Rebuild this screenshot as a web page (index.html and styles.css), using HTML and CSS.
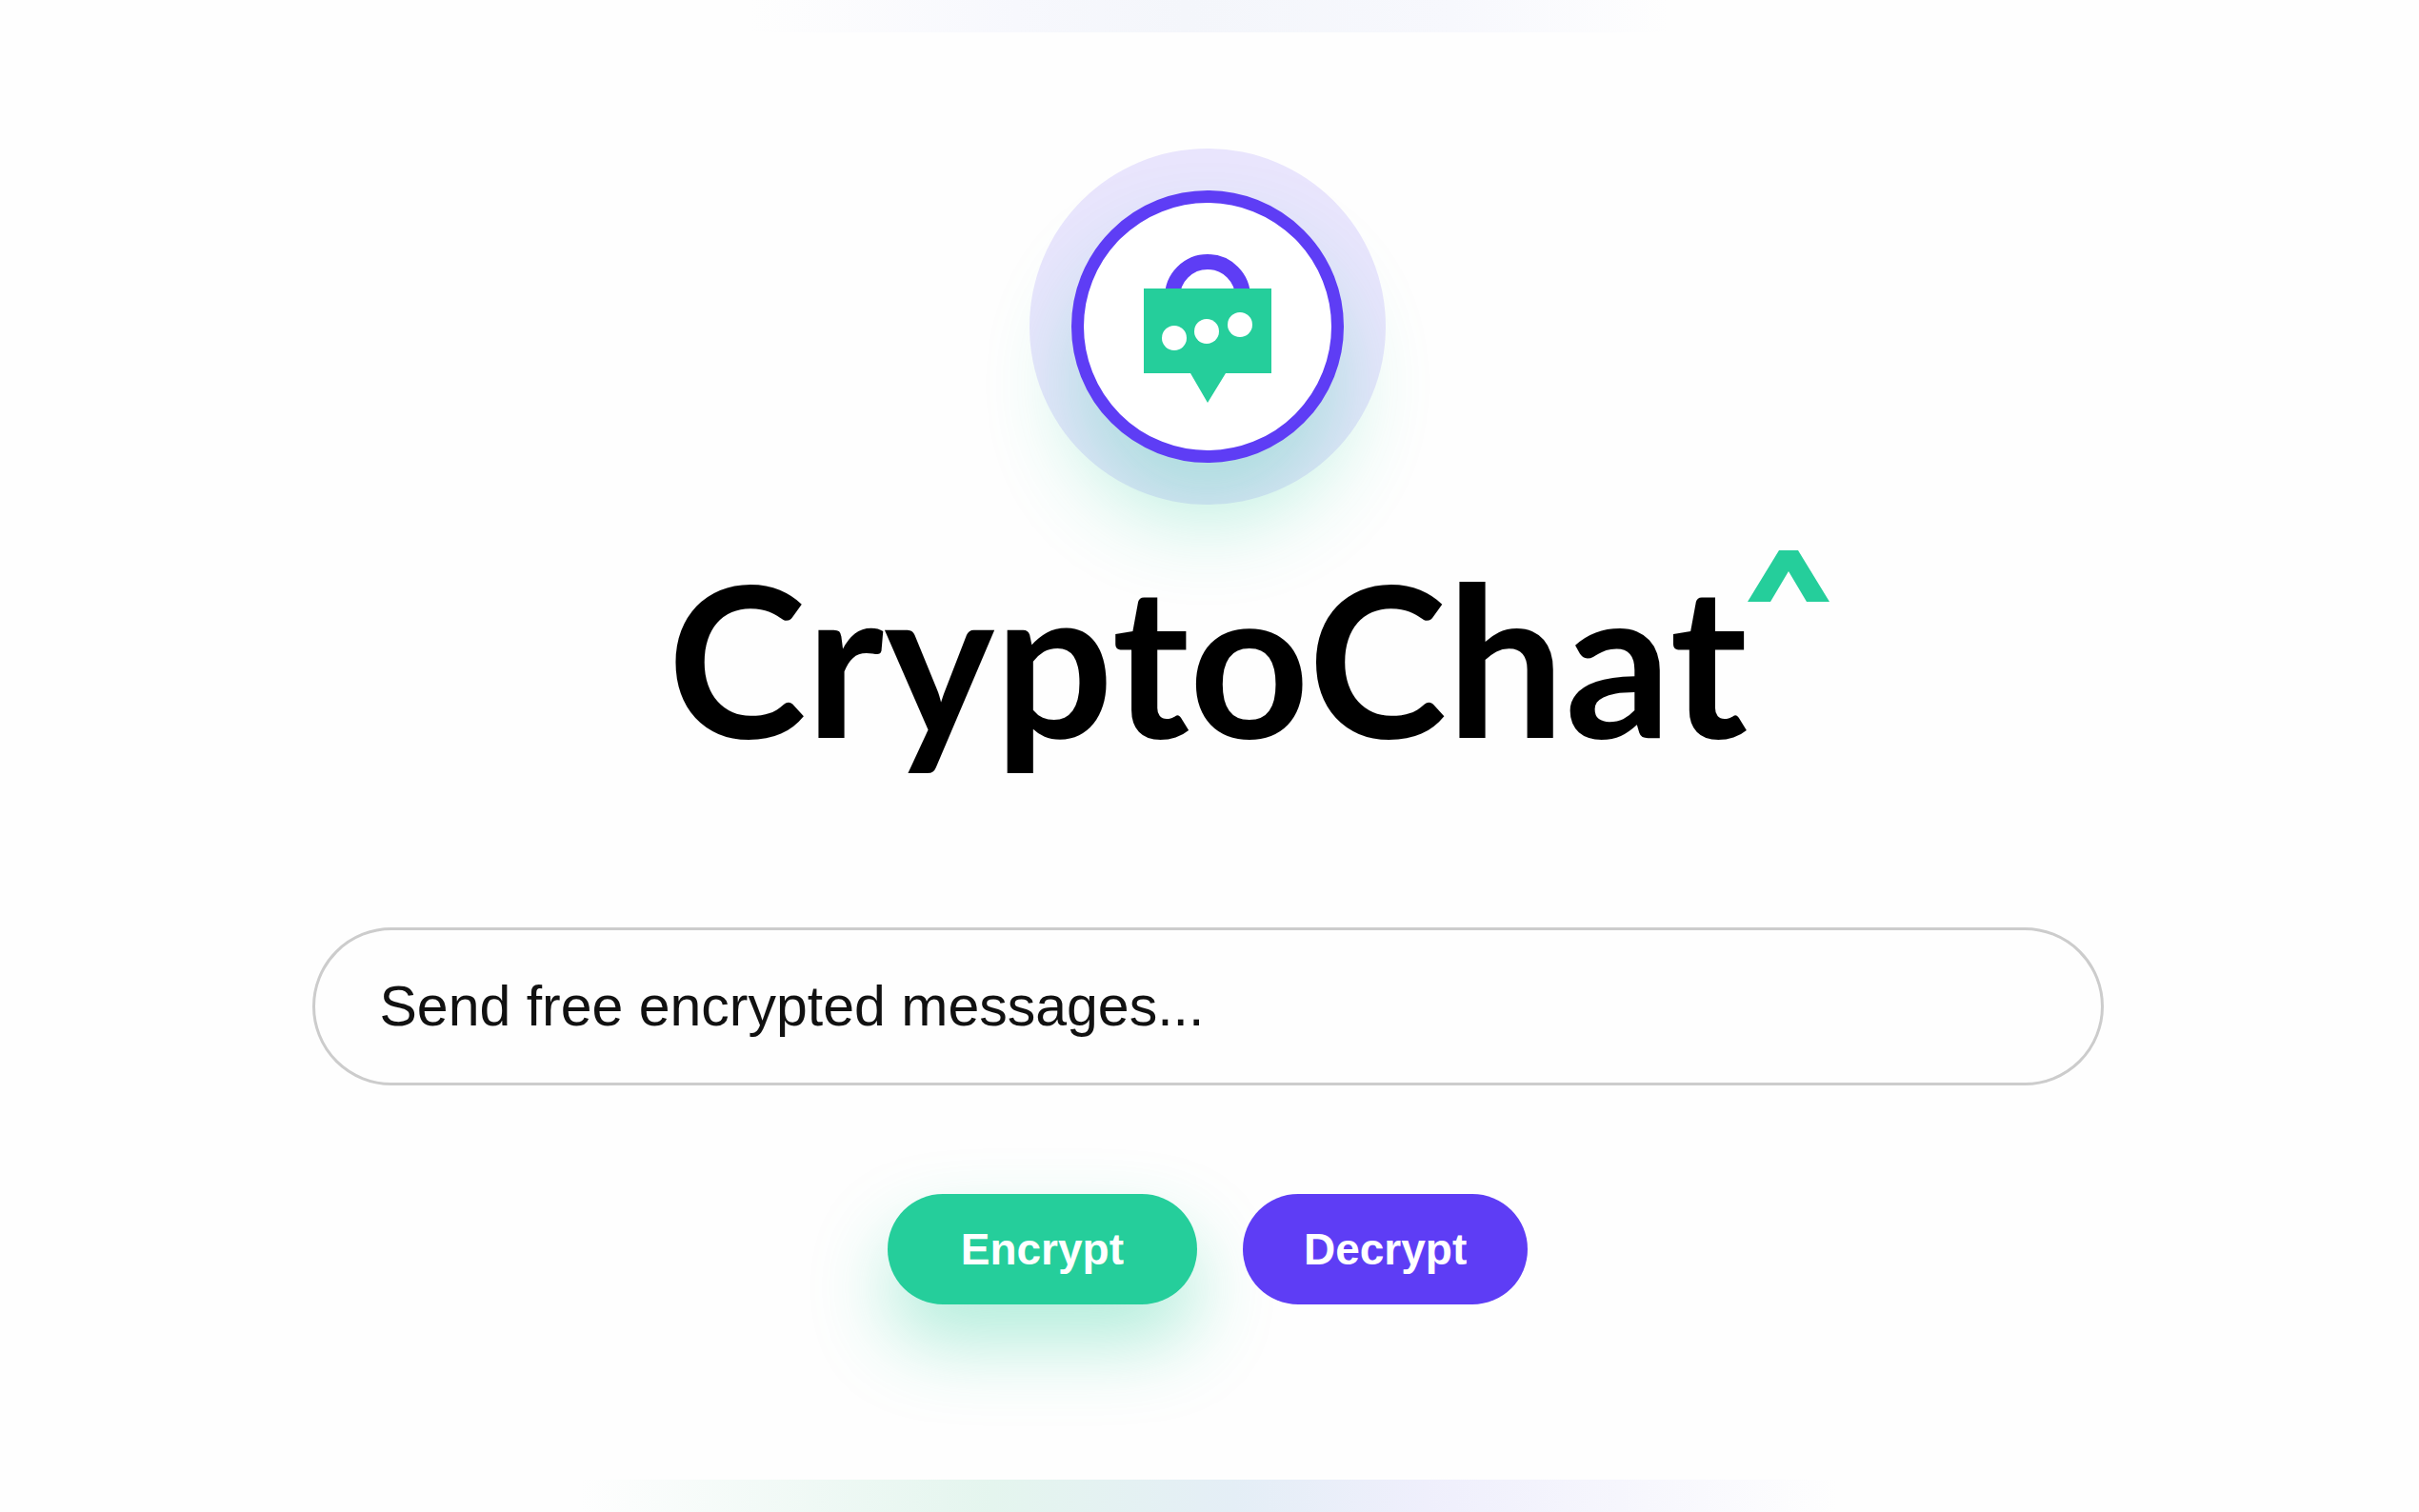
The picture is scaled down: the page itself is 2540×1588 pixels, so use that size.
FILE: index.html
```html
<!DOCTYPE html>
<html lang="en">
<head>
    <meta charset="UTF-8">
    <meta name="viewport" content="width=device-width, initial-scale=1.0">
    <title>CryptoChat</title>
    <link rel="stylesheet" href="styles.css">
</head>
<body>

    <div class="glow glow-top"></div>

    <main class="container">
        <!-- Logo -->
        <div class="logo">
            <div class="logo-ring">
                <svg class="logo-icon" viewBox="0 -4 134 160" aria-hidden="true">
                    <path d="M30 45a37 37 0 0 1 74 0" fill="none" stroke="#5e3df5" stroke-width="16"/>
                    <path d="M0 36h134v89H86l-19 31-18-31H0z" fill="#25ce9b"/>
                    <circle cx="32" cy="88" r="13" fill="#fff"/>
                    <circle cx="66" cy="81" r="13" fill="#fff"/>
                    <circle cx="101" cy="74" r="13" fill="#fff"/>
                </svg>
            </div>
        </div>

        <h1>
            CryptoChat
            <svg class="accent" viewBox="0 0 86 54" aria-hidden="true">
                <path d="M33 0h20l33 54H62L43 22 24 54H0z" fill="#25ce9b"/>
            </svg>
        </h1>

        <!-- Message form -->
        <form class="message-form">
            <input type="text" id="message" class="message" aria-label="Message" placeholder="Send free encrypted messages...">
            <div class="buttons">
                <button type="button" class="btn-encrypt">Encrypt</button>
                <button type="button" class="btn-decrypt">Decrypt</button>
            </div>
        </form>
    </main>

    <div class="glow glow-bottom"></div>

</body>
</html>
```
FILE: styles.css
```css
* {
    box-sizing: border-box;
}
body {
    font-family: "Liberation Sans", Arial, sans-serif;
    background-color: #fefefe;
    color: black;
    margin: 0;
    min-height: 100vh;
    display: flex;
    flex-direction: column;
}
.glow {
    height: 34px;
}
.glow-top {
    background: linear-gradient(to right, transparent 31%, #f7f8fd 42%, #f4f6fb 49%, #f7f8fd 60%, transparent 69%);
}
.glow-bottom {
    background: linear-gradient(to right, transparent 24%, #e4f5ee 41%, #e4eef6 51%, #efeffc 59%, transparent 76%);
}
.container {
    flex: 1;
    display: flex;
    flex-direction: column;
    align-items: center;
    padding: 122px 4px 0 0;
}
.logo {
    width: 374px;
    height: 374px;
    display: flex;
    justify-content: center;
    align-items: center;
    border-radius: 50%;
    background-color: #e9e5fd;
}
.logo-ring {
    width: 286px;
    height: 286px;
    display: flex;
    justify-content: center;
    align-items: center;
    border: 13px solid #5e3df5;
    border-radius: 50%;
    background-color: white;
    box-shadow: 0 60px 90px rgba(37, 206, 155, 0.3);
}
.logo-icon {
    width: 134px;
    height: 160px;
}
h1 {
    position: relative;
    margin: 10px 0 134px;
    font-family: Lato, sans-serif;
    font-size: 220px;
    font-weight: 700;
    line-height: 300px;
}
.accent {
    position: absolute;
    left: 100%;
    top: 38px;
    width: 86px;
    height: 54px;
}
.message-form {
    width: 90%;
    max-width: 1881px;
}
.message {
    width: 100%;
    height: 166px;
    padding: 0 68px;
    border: 3px solid #ccc;
    border-radius: 83px;
    background-color: transparent;
    font-family: inherit;
    font-size: 59px;
    color: #111;
}
.message::placeholder {
    color: #111;
    opacity: 1;
}
.buttons {
    display: flex;
    justify-content: center;
    align-items: flex-start;
    gap: 48px;
    margin-top: 114px;
}
button {
    padding: 0 64px;
    border: none;
    border-radius: 60px;
    font-family: inherit;
    font-size: 46px;
    font-weight: bold;
    line-height: 116px;
    color: white;
    cursor: pointer;
}
.btn-encrypt {
    padding: 0 77px;
    background-color: #25ce9b;
    box-shadow: 0 40px 80px rgba(37, 206, 155, 0.35);
}
.btn-decrypt {
    background-color: #5e3df5;
}
```
